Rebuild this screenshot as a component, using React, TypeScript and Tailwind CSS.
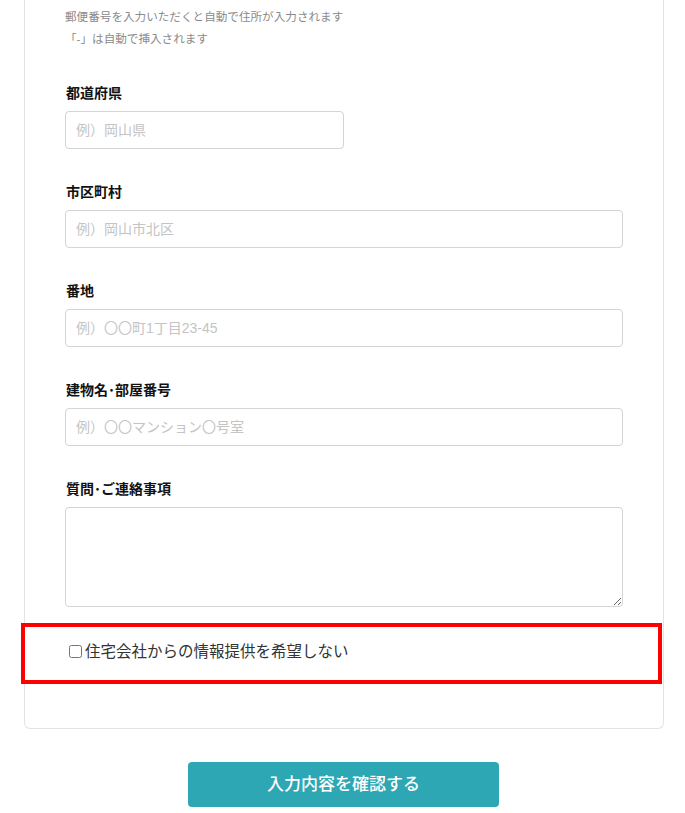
import React from "react";

const font = { fontFamily: '"Liberation Sans", "Noto Sans CJK JP", sans-serif' };

function Field({ label, placeholder, narrow }: { label: string; placeholder: string; narrow?: boolean }) {
  return (
    <div className="flex flex-col">
      <label className="text-[14px] leading-[20px] font-bold text-[#111] ml-[1px]">{label}</label>
      <input
        type="text"
        placeholder={placeholder}
        className={`mt-2 h-[38px] ${narrow ? "w-[279px]" : "w-full"} rounded-[4px] border border-[#d3d3d8] bg-white px-[10px] text-[14px] text-[#333] placeholder:text-[#c4c4c4] outline-none`}
      />
    </div>
  );
}

export default function App() {
  return (
    <div className="w-[685px] min-h-[813px] bg-white" style={font}>
      <div className="mx-[24px] w-[640px] border border-t-0 border-[#e3e3e6] rounded-b-[6px] bg-white px-[40px] pt-[6px] pb-[44px]">
        <p className="text-[11.6px] leading-[22px] text-[#8a8a8a]">郵便番号を入力いただくと自動で住所が入力されます</p>
        <p className="text-[11.6px] leading-[22px] text-[#8a8a8a]">「-」は自動で挿入されます</p>

        <div className="mt-[33px] flex flex-col gap-[33px]">
          <Field label="都道府県" placeholder="例）岡山県" narrow />
          <Field label="市区町村" placeholder="例）岡山市北区" />
          <Field label="番地" placeholder="例）〇〇町1丁目23-45" />
          <Field label="建物名･部屋番号" placeholder="例）〇〇マンション〇号室" />
          <div className="flex flex-col">
            <label className="text-[14px] leading-[20px] font-bold text-[#111] ml-[1px]">質問･ご連絡事項</label>
            <textarea className="mt-2 h-[100px] w-full rounded-[4px] border border-[#d3d3d8] bg-white px-[10px] py-[8px] text-[14px] outline-none" />
          </div>
        </div>

        <div className="mt-[16px] ml-[-44px] mr-[-39px] h-[61px] border-[4px] border-[#ff0000] flex items-center pl-[44px] pb-[4px]">
          <label className="flex items-center text-[15.5px] leading-[22px] text-[#333]">
            <input type="checkbox" className="m-0 mr-[3px] h-[13px] w-[13px]" />
            住宅会社からの情報提供を希望しない
          </label>
        </div>
      </div>

      <div className="mt-[33px] flex justify-center">
        <button className="ml-[2px] h-[45px] w-[311px] rounded-[4px] bg-[#2ea7b4] text-[17px] font-medium text-white">
          入力内容を確認する
        </button>
      </div>
    </div>
  );
}
